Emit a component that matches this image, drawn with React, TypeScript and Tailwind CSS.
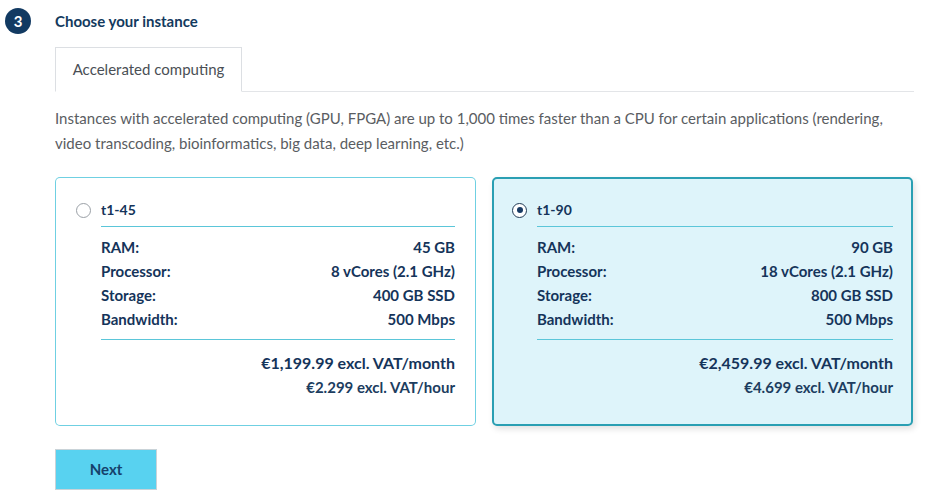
const specs = [
  {
    name: 't1-45',
    ram: '45 GB',
    cpu: '8 vCores (2.1 GHz)',
    storage: '400 GB SSD',
    bandwidth: '500 Mbps',
    month: '€1,199.99 excl. VAT/month',
    hour: '€2.299 excl. VAT/hour',
    selected: false,
  },
  {
    name: 't1-90',
    ram: '90 GB',
    cpu: '18 vCores (2.1 GHz)',
    storage: '800 GB SSD',
    bandwidth: '500 Mbps',
    month: '€2,459.99 excl. VAT/month',
    hour: '€4.699 excl. VAT/hour',
    selected: true,
  },
];

const cardOn =
  'rounded-[5px] border-2 border-[#2a9fb3] bg-[#def4fa] px-[18px] pt-[21px] pb-[25px] shadow-[2px_3px_6px_rgba(0,0,0,0.12)]';
const cardOff = 'rounded-[5px] ring-1 ring-inset ring-[#6fd0e2] bg-white px-[21px] pt-[23px] pb-[27px]';

function Row({ label, value }: { label: string; value: string }) {
  return (
    <div className="flex justify-between h-6 items-center">
      <span>{label}</span>
      <span>{value}</span>
    </div>
  );
}

function Card({ s }: { s: (typeof specs)[number] }) {
  return (
    <div className={s.selected ? cardOn : cardOff}>
      <div className="flex items-center">
        <span
          className={
            s.selected
              ? 'w-[15px] h-[15px] rounded-full border border-[#203a55] bg-white flex items-center justify-center'
              : 'w-[15px] h-[15px] rounded-full border border-[#9aa0a6] bg-white'
          }
        >
          {s.selected && <span className="w-[6px] h-[6px] rounded-full bg-[#173a63]" />}
        </span>
        <span className="ml-[10px] font-bold text-[14px] leading-5 text-[#15345a]">{s.name}</span>
      </div>
      <div className="ml-[25px] text-[15px] font-bold text-[#15345a]">
        <div className="border-b border-[#5bc6d9] h-[7px]" />
        <div className="mt-[8px] pb-2 border-b border-[#5bc6d9]">
          <Row label="RAM:" value={s.ram} />
          <Row label="Processor:" value={s.cpu} />
          <Row label="Storage:" value={s.storage} />
          <Row label="Bandwidth:" value={s.bandwidth} />
        </div>
        <div className="mt-[11px] text-right">
          <div className="h-6 leading-6 text-[16px] font-bold">{s.month}</div>
          <div className="h-6 leading-6 text-[15px] font-bold text-[#1c3d60]">{s.hour}</div>
        </div>
      </div>
    </div>
  );
}

export default function App() {
  return (
    <div className="w-[926px] h-[497px] bg-white font-['Lato','Open_Sans',sans-serif] overflow-hidden">
      <div className="flex items-center pt-[8px]">
        <div className="w-[55px] pl-[5px]">
          <div className="w-[26px] h-[26px] rounded-full bg-[#123a62] text-white text-[15px] font-bold flex items-center justify-center">
            3
          </div>
        </div>
        <h2 className="text-[15px] font-bold text-[#133a5e]">Choose your instance</h2>
      </div>

      <div className="pl-[55px] pr-[12px]">
        <div className="mt-[13px] flex border-b border-[#e3e5e8]">
          <div className="w-[187px] h-[45px] -mb-px border border-b-white border-[#dcdfe3] flex items-center justify-center text-[15px] text-[#4a4f55] bg-white">
            Accelerated computing
          </div>
        </div>

        <p className="mt-[14px] text-[15px] leading-[25px] text-[#5a5d62]">
          Instances with accelerated computing (GPU, FPGA) are up to 1,000 times faster than a CPU for certain applications (rendering,
          video transcoding, bioinformatics, big data, deep learning, etc.)
        </p>

        <div className="mt-[21px] grid grid-cols-2 gap-4 w-[858px]">
          {specs.map((s) => (
            <Card key={s.name} s={s} />
          ))}
        </div>

        <button className="mt-[23px] w-[102px] h-[41px] bg-[#58d2f0] border border-[#c9d3d8] text-[15px] font-bold text-[#15416b]">
          Next
        </button>
      </div>
    </div>
  );
}
